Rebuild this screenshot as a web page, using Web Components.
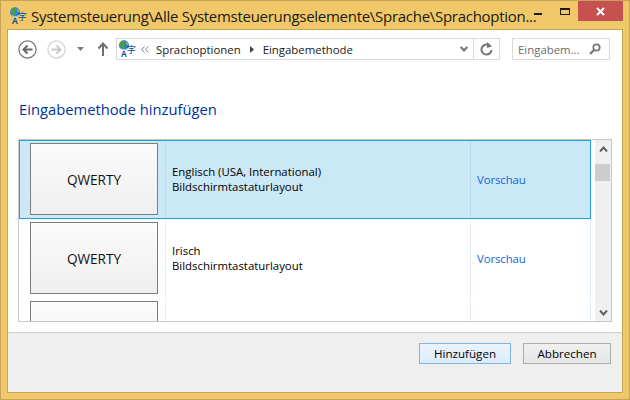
<!DOCTYPE html>
<html lang="de">
<head>
<meta charset="utf-8">
<title>Eingabemethode hinzufügen</title>
<style>
    html, body { margin: 0; padding: 0; width: 630px; height: 400px; overflow: hidden; }
    body { font-family: "Open Sans", "Noto Sans", "Liberation Sans", sans-serif; }
</style>
</head>
<body>

<template id="lang-icon">
    <svg width="20" height="20" viewBox="0 0 20 20">
        <circle cx="5" cy="5.2" r="5" fill="#2f7fd6"/>
        <path d="M1.2 2.5 L4.5 .6 L6.5 2 L5 4 L6 6.5 L4 9.2 L2.5 7 L.6 5 Z" fill="#4f9e3e"/>
        <path d="M7 1.2 L9.5 3.5 L8.5 5.5 L7 4 Z" fill="#7fbf62"/>
        <path d="M1.5 8 A5 5 0 0 0 8.5 8.5" fill="none" stroke="#a8d3f5"/>
        <text x="12.2" y="13" font-size="9" font-family="'Noto Sans CJK SC', sans-serif" text-anchor="middle" fill="#0a47a0">字</text>
        <text x="4.8" y="16.5" font-size="8.5" font-weight="700" font-family="'Liberation Sans', sans-serif" text-anchor="middle" fill="#0a47a0">A</text>
    </svg>
</template>

<script>
    class LangIcon extends HTMLElement {
        constructor() {
            super();
            this.attachShadow({ mode: 'open' });
            this.shadowRoot.innerHTML = `<style>:host { display: block; width: 20px; height: 20px; } svg { display: block; }</style>`;
            this.shadowRoot.appendChild(document.getElementById('lang-icon').content.cloneNode(true));
        }
    }

    class WinFrame extends HTMLElement {
        constructor() {
            super();
            this.attachShadow({ mode: 'open' });
            this.shadowRoot.innerHTML = `
                <style>
                    :host { display: flex; flex-direction: column; width: 630px; height: 400px; box-sizing: border-box;
                            background: #f0c869; border: 1px solid #c4a45a; }
                    .client { flex: 1; margin: 0 6px 6px; background: #fff; border: 1px solid #c4a45a;
                              display: flex; flex-direction: column; min-height: 0; }
                </style>
                <slot name="title"></slot>
                <div class="client"><slot></slot></div>
            `;
        }
    }

    class WinTitle extends HTMLElement {
        constructor() {
            super();
            this.attachShadow({ mode: 'open' });
            this.shadowRoot.innerHTML = `
                <style>
                    :host { display: flex; align-items: flex-start; height: 28px; flex: none; color: #1c1a12; }
                    lang-icon { margin: 6px 0 0 9px; }
                    .text { margin: 3px 0 0 1px; width: 500px; font-size: 15px; line-height: 24px; white-space: nowrap; letter-spacing: -0.28px; }
                    .buttons { margin-left: 3px; display: flex; align-items: flex-start; }
                    .min { width: 8px; height: 2px; background: #1c1a12; margin: 12px 18px 0 0; }
                    .max { width: 8px; height: 4px; border: 1px solid #1c1a12; border-top-width: 2px; margin: 7px 8px 0 0; }
                    .close { width: 45px; height: 20px; background: #c75050; display: flex; align-items: center; justify-content: center; }
                </style>
                <lang-icon></lang-icon>
                <span class="text"><slot></slot></span>
                <div class="buttons">
                    <div class="min"></div>
                    <div class="max"></div>
                    <div class="close">
                        <svg width="9" height="9" viewBox="0 0 9 9"><path d="M1 1 L8 8 M8 1 L1 8" stroke="#fff" stroke-width="2"/></svg>
                    </div>
                </div>
            `;
        }
    }

    class NavBar extends HTMLElement {
        constructor() {
            super();
            this.attachShadow({ mode: 'open' });
            this.shadowRoot.innerHTML = `
                <style>
                    :host { display: flex; align-items: center; height: 22px; flex: none; margin-top: 8px; padding-left: 10px; }
                    svg { display: block; flex: none; }
                    .fwd { margin-left: 10px; }
                    .drop { margin-left: 11px; }
                    .up { margin-left: 13px; }
                    .addr { margin-left: 7px; width: 384px; height: 22px; box-sizing: border-box; border: 1px solid #d9d9d9; display: flex; align-items: center; font-size: 11.4px; color: #1a1a1a; }
                    lang-icon { margin: 1px 0 0 2px; }
                    .chev { margin-left: 2px; }
                    .crumb { margin-left: 7px; white-space: nowrap; }
                    .crumb2 { margin-left: 9px; white-space: nowrap; }
                    .sep { margin-left: 9px; }
                    .spacer { flex: 1; }
                    .refresh { width: 25px; height: 20px; border-left: 1px solid #d9d9d9; display: flex; align-items: center; justify-content: center; }
                    .search { margin-left: 12px; width: 98px; height: 22px; box-sizing: border-box; border: 1px solid #d9d9d9; display: flex; align-items: center; padding: 0 8px 0 5px; color: #6d6d6d; font-size: 11.4px; white-space: nowrap; }
                    .search span { flex: 1; }
                </style>
                <svg width="19" height="19" viewBox="0 0 19 19">
                    <circle cx="9.5" cy="9.5" r="8.6" fill="#fff" stroke="#757575" stroke-width="1.3"/>
                    <path d="M14.5 9.5 H6 M9.5 5.5 L5.5 9.5 L9.5 13.5" fill="none" stroke="#666" stroke-width="2"/>
                </svg>
                <svg class="fwd" width="19" height="19" viewBox="0 0 19 19">
                    <circle cx="9.5" cy="9.5" r="8.6" fill="#fff" stroke="#d4d4d4" stroke-width="1.3"/>
                    <path d="M4.5 9.5 H13 M9.5 5.5 L13.5 9.5 L9.5 13.5" fill="none" stroke="#c9c9c9" stroke-width="2"/>
                </svg>
                <svg class="drop" width="7" height="4" viewBox="0 0 7 4"><path d="M0 0 H7 L3.5 4 Z" fill="#7a7a7a"/></svg>
                <svg class="up" width="12" height="14" viewBox="0 0 12 14">
                    <path d="M6 14 V2 M1.5 6.5 L6 1.5 L10.5 6.5" fill="none" stroke="#6f6f6f" stroke-width="2"/>
                </svg>
                <div class="addr">
                    <lang-icon></lang-icon>
                    <svg class="chev" width="8" height="7" viewBox="0 0 8 7"><path d="M3.5 .5 L.8 3.5 L3.5 6.5 M7.2 .5 L4.5 3.5 L7.2 6.5" fill="none" stroke="#808080"/></svg>
                    <span class="crumb"><slot name="c1"></slot></span>
                    <svg class="sep" width="4" height="7" viewBox="0 0 4 7"><path d="M0 0 L4 3.5 L0 7 Z" fill="#404040"/></svg>
                    <span class="crumb2"><slot name="c2"></slot></span>
                    <div class="spacer"></div>
                    <svg width="8" height="6" viewBox="0 0 8 6" style="margin-right:5px"><path d="M.7 1 L4 4.5 L7.3 1" fill="none" stroke="#707070" stroke-width="2"/></svg>
                    <div class="refresh">
                        <svg width="13" height="14" viewBox="0 0 13 14"><path d="M9.6 3.6 A5 5 0 1 0 11.5 8" fill="none" stroke="#747474" stroke-width="2"/><path d="M7 0 V6 L12 4.5 Z" fill="#747474"/></svg>
                    </div>
                </div>
                <div class="search">
                    <span><slot name="search"></slot></span>
                    <svg width="12" height="12" viewBox="0 0 12 12"><circle cx="7.5" cy="4.5" r="3.2" fill="none" stroke="#767676" stroke-width="1.7"/><path d="M5 7 L1 11" stroke="#767676" stroke-width="2.2"/></svg>
                </div>
            `;
        }
    }

    class ImeList extends HTMLElement {
        constructor() {
            super();
            this.attachShadow({ mode: 'open' });
            this.shadowRoot.innerHTML = `
                <style>
                    :host { display: flex; flex: none; height: 183px; margin: 0 10px; box-sizing: border-box; border: 1px solid #c8c8c8; }
                    .rows { flex: 1; min-width: 0; overflow: hidden; display: flex; flex-direction: column; }
                </style>
                <div class="rows"><slot></slot></div>
                <ime-scrollbar></ime-scrollbar>
            `;
        }
    }

    class ImeScrollbar extends HTMLElement {
        constructor() {
            super();
            this.attachShadow({ mode: 'open' });
            this.shadowRoot.innerHTML = `
                <style>
                    :host { display: flex; flex-direction: column; flex: none; width: 16px; margin-left: 4px; background: #f0f0f0; }
                    .arrow { height: 17px; display: flex; align-items: center; justify-content: center; flex: none; }
                    .track { flex: 1; }
                    .thumb { height: 17px; margin-top: 7px; width: 15px; background: #cdcdcd; }
                </style>
                <div class="arrow"><svg width="9" height="6" viewBox="0 0 9 6"><path d="M1 5.5 L4.5 1.5 L8 5.5" fill="none" stroke="#606060" stroke-width="2"/></svg></div>
                <div class="track"><div class="thumb"></div></div>
                <div class="arrow"><svg width="9" height="6" viewBox="0 0 9 6"><path d="M1 .5 L4.5 4.5 L8 .5" fill="none" stroke="#606060" stroke-width="2"/></svg></div>
            `;
        }
    }

    class ImeRow extends HTMLElement {
        constructor() {
            super();
            this.attachShadow({ mode: 'open' });
            this.shadowRoot.innerHTML = `
                <style>
                    :host { display: grid; grid-template-columns: 146px 305px 1fr; flex: none; height: 79px; box-sizing: border-box; border: 1px solid transparent; border-right-color: #e3effa; font-size: 11.4px; line-height: 15px; color: #000; }
                    :host([selected]) { background: #cbe8f6; border-color: #26a0da; }
                    .tile-cell { padding: 2px 0 0 10px; border-right: 1px solid #e3effa; }
                    :host([selected]) .tile-cell, :host([selected]) .text { border-right-color: #b5dcf5; }
                    .tile { width: 128px; height: 72px; box-sizing: border-box; border: 1px solid #7d7d7d; padding-top: 1px; background: linear-gradient(#fbfbfb, #efefef); display: flex; align-items: center; justify-content: center; font-size: 13.6px; color: #111; }
                    .text { padding: 0 0 2px 6px; border-right: 1px solid #e3effa; display: flex; flex-direction: column; justify-content: center; white-space: nowrap; }
                    .link { padding-left: 6px; display: flex; align-items: center; color: #1565d8; white-space: nowrap; letter-spacing: -0.1px; }
                </style>
                <div class="tile-cell"><div class="tile"><slot name="layout"></slot></div></div>
                <div class="text"><slot name="name"></slot><slot name="kind"></slot></div>
                <div class="link"><slot name="action"></slot></div>
            `;
        }
    }

    class DialogFooter extends HTMLElement {
        constructor() {
            super();
            this.attachShadow({ mode: 'open' });
            this.shadowRoot.innerHTML = `
                <style>
                    :host { display: flex; flex: 1; justify-content: flex-end; align-items: flex-start; gap: 12px; padding: 10px 11px 0 0; background: #efefef; border-top: 1px solid #cfcfcf; margin-top: 10px; }
                </style>
                <slot></slot>
            `;
        }
    }

    class WinButton extends HTMLElement {
        constructor() {
            super();
            this.attachShadow({ mode: 'open' });
            this.shadowRoot.innerHTML = `
                <style>
                    :host { display: flex; align-items: center; justify-content: center; box-sizing: border-box; height: 21px; border: 1px solid #adadad; background: linear-gradient(#f0f0f0, #e5e5e5); font-size: 11.6px; color: #000; white-space: nowrap; }
                    :host([primary]) { border-color: #7eb4ea; background: linear-gradient(#ecf4fc, #dcecfc); }
                </style>
                <slot></slot>
            `;
        }
    }

    class PageHeading extends HTMLElement {
        constructor() {
            super();
            this.attachShadow({ mode: 'open' });
            this.shadowRoot.innerHTML = `
                <style>
                    :host { display: block; flex: none; margin: 39px 0 19px 11px; font-size: 14.75px; line-height: 21px; color: #003399; white-space: nowrap; }
                </style>
                <slot></slot>
            `;
        }
    }

    customElements.define('lang-icon', LangIcon);
    customElements.define('win-frame', WinFrame);
    customElements.define('win-title', WinTitle);
    customElements.define('nav-bar', NavBar);
    customElements.define('page-heading', PageHeading);
    customElements.define('ime-scrollbar', ImeScrollbar);
    customElements.define('ime-list', ImeList);
    customElements.define('ime-row', ImeRow);
    customElements.define('dialog-footer', DialogFooter);
    customElements.define('win-button', WinButton);
</script>

<win-frame>
    <win-title slot="title">Systemsteuerung\Alle Systemsteuerungselemente\Sprache\Sprachoption...</win-title>
    <nav-bar>
        <span slot="c1">Sprachoptionen</span>
        <span slot="c2">Eingabemethode</span>
        <span slot="search">Eingabem...</span>
    </nav-bar>
    <page-heading>Eingabemethode hinzufügen</page-heading>
    <ime-list>
        <ime-row selected>
            <span slot="layout">QWERTY</span>
            <span slot="name">Englisch (USA, International)</span>
            <span slot="kind">Bildschirmtastaturlayout</span>
            <span slot="action">Vorschau</span>
        </ime-row>
        <ime-row>
            <span slot="layout">QWERTY</span>
            <span slot="name">Irisch</span>
            <span slot="kind">Bildschirmtastaturlayout</span>
            <span slot="action">Vorschau</span>
        </ime-row>
        <ime-row></ime-row>
    </ime-list>
    <dialog-footer>
        <win-button primary style="width:92px">Hinzufügen</win-button>
        <win-button style="width:88px">Abbrechen</win-button>
    </dialog-footer>
</win-frame>

</body>
</html>
